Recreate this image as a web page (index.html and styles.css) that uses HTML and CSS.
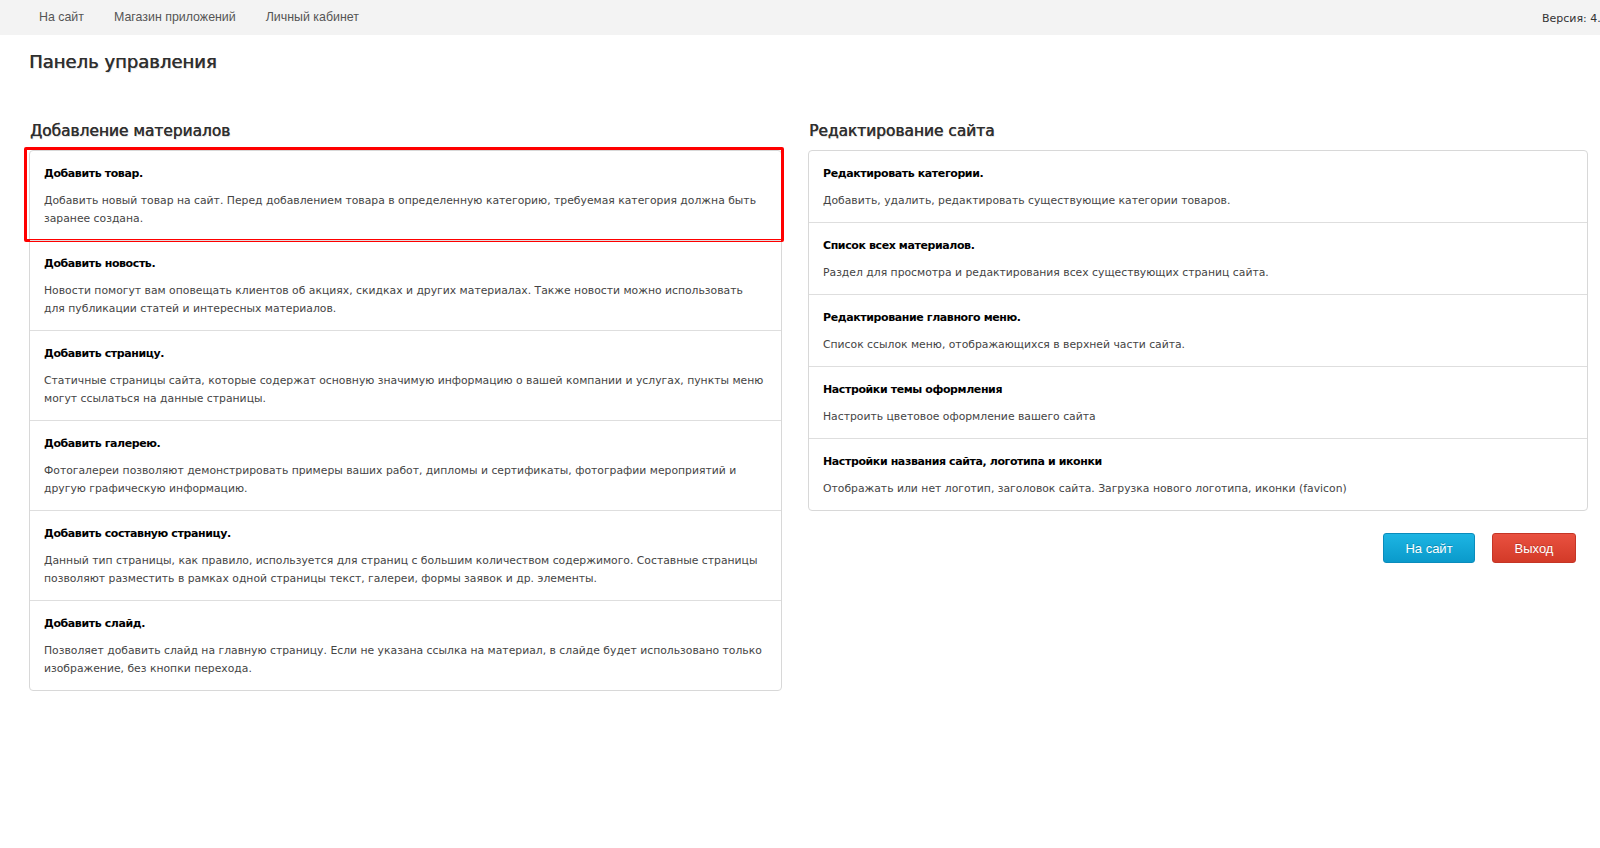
FILE: index.html
```html
<!DOCTYPE html>
<html lang="ru">
<head>
<meta charset="utf-8">
<title>Панель управления</title>
<link rel="stylesheet" href="styles.css">
</head>
<body>
<header class="topbar">
  <nav class="topnav">
    <a href="#">На сайт</a>
    <a href="#">Магазин приложений</a>
    <a href="#">Личный кабинет</a>
  </nav>
  <span class="version">Версия: 4.3.1</span>
</header>
<main class="page">
  <h1 class="page-title">Панель управления</h1>
  <div class="columns">
    <section class="col">
      <h2 class="section-title">Добавление материалов</h2>
      <div class="card">
        <div class="item item-highlight">
          <div class="item-title">Добавить товар.</div>
          <div class="item-desc">Добавить новый товар на сайт. Перед добавлением товара в определенную категорию, требуемая категория должна быть заранее создана.</div>
        </div>
        <div class="item">
          <div class="item-title">Добавить новость.</div>
          <div class="item-desc">Новости помогут вам оповещать клиентов об акциях, скидках и других материалах. Также новости можно использовать для публикации статей и интересных материалов.</div>
        </div>
        <div class="item">
          <div class="item-title">Добавить страницу.</div>
          <div class="item-desc">Статичные страницы сайта, которые содержат основную значимую информацию о вашей компании и услугах, пункты меню могут ссылаться на данные страницы.</div>
        </div>
        <div class="item">
          <div class="item-title">Добавить галерею.</div>
          <div class="item-desc">Фотогалереи позволяют демонстрировать примеры ваших работ, дипломы и сертификаты, фотографии мероприятий и другую графическую информацию.</div>
        </div>
        <div class="item">
          <div class="item-title">Добавить составную страницу.</div>
          <div class="item-desc">Данный тип страницы, как правило, используется для страниц с большим количеством содержимого. Составные страницы позволяют разместить в рамках одной страницы текст, галереи, формы заявок и др. элементы.</div>
        </div>
        <div class="item">
          <div class="item-title">Добавить слайд.</div>
          <div class="item-desc">Позволяет добавить слайд на главную страницу. Если не указана ссылка на материал, в слайде будет использовано только изображение, без кнопки перехода.</div>
        </div>
      </div>
    </section>
    <section class="col col-right">
      <h2 class="section-title">Редактирование сайта</h2>
      <div class="card">
        <div class="item">
          <div class="item-title">Редактировать категории.</div>
          <div class="item-desc">Добавить, удалить, редактировать существующие категории товаров.</div>
        </div>
        <div class="item">
          <div class="item-title">Список всех материалов.</div>
          <div class="item-desc">Раздел для просмотра и редактирования всех существующих страниц сайта.</div>
        </div>
        <div class="item">
          <div class="item-title">Редактирование главного меню.</div>
          <div class="item-desc">Список ссылок меню, отображающихся в верхней части сайта.</div>
        </div>
        <div class="item">
          <div class="item-title">Настройки темы оформления</div>
          <div class="item-desc">Настроить цветовое оформление вашего сайта</div>
        </div>
        <div class="item">
          <div class="item-title">Настройки названия сайта, логотипа и иконки</div>
          <div class="item-desc">Отображать или нет логотип, заголовок сайта. Загрузка нового логотипа, иконки (favicon)</div>
        </div>
      </div>
      <div class="actions">
        <a href="#" class="btn btn-blue">На сайт</a>
        <a href="#" class="btn btn-red">Выход</a>
      </div>
    </section>
  </div>
</main>
</body>
</html>
```
FILE: styles.css
```css
* { box-sizing: border-box; }
html, body { margin: 0; padding: 0; }
body {
  background: #fff;
  font-family: "DejaVu Sans", Verdana, sans-serif;
  color: #333;
  overflow-x: hidden;
}
.topbar {
  height: 35px;
  background: #f3f3f3;
  display: flex;
  align-items: center;
  overflow: hidden;
}
.topnav {
  display: flex;
  gap: 30px;
  padding-left: 39px;
}
.topnav a {
  font-family: "Liberation Sans", Arial, sans-serif;
  font-size: 12.4px;
  color: #555;
  text-decoration: none;
  position: relative;
  top: -1px;
}
.version {
  margin-left: auto;
  flex-shrink: 0;
  width: 58px;
  overflow: hidden;
  white-space: nowrap;
  font-size: 11px;
  color: #333;
  position: relative;
  top: 1px;
}
.page {
  padding: 0 12px 0 29px;
}
.page-title {
  margin: 0;
  padding-top: 16px;
  height: 86px;
  font-size: 18px;
  font-weight: normal;
  color: #2f2f2f;
  text-shadow: 0.4px 0 0 #333, 1px 1px 1px rgba(0,0,0,0.15);
}
.columns {
  display: grid;
  grid-template-columns: 753px 780px;
  column-gap: 26px;
}
.section-title {
  margin: 0 0 9px 1px;
  font-size: 15.4px;
  font-weight: normal;
  color: #2f2f2f;
  line-height: 20px;
  text-shadow: 0.4px 0 0 #333, 1px 1px 1px rgba(0,0,0,0.15);
}
.card {
  border: 1px solid #d8d8d8;
  border-radius: 4px;
  background: #fff;
}
.item {
  padding: 14px 14px 12px;
  border-top: 1px solid #dedede;
  position: relative;
}
.item:first-child { border-top: none; }
.item-highlight::after {
  content: "";
  position: absolute;
  left: -6px;
  top: -4px;
  right: -3px;
  bottom: -2px;
  border: 3px solid #f00;
  border-radius: 2px;
  pointer-events: none;
}
.item-title {
  font-size: 11px;
  font-weight: bold;
  letter-spacing: -0.4px;
  color: #000;
  line-height: 18px;
  margin-bottom: 9px;
}
.item-desc {
  font-size: 10.8px;
  color: #444;
  line-height: 18px;
}
.actions {
  display: flex;
  justify-content: flex-end;
  gap: 17px;
  padding: 22px 12px 0 0;
}
.btn {
  display: inline-flex;
  align-items: center;
  justify-content: center;
  height: 30px;
  border-radius: 3px;
  font-family: "Liberation Sans", Arial, sans-serif;
  font-size: 13px;
  color: #fff;
  text-decoration: none;
  text-shadow: 0 -1px 0 rgba(0,0,0,0.2);
}
.btn-blue {
  width: 92px;
  background: linear-gradient(#1db5e3, #0a9acb);
  border: 1px solid #0a8cbc;
}
.btn-red {
  width: 84px;
  background: linear-gradient(#e95140, #d33a28);
  border: 1px solid #c53526;
}
```
